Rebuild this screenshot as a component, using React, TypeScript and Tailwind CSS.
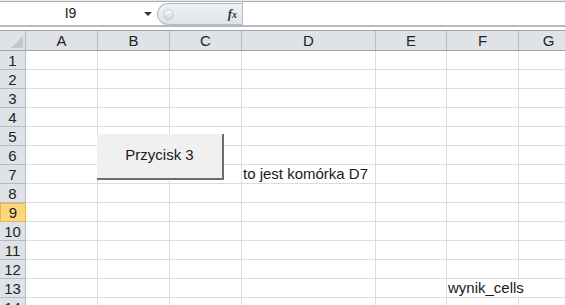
import React from 'react';

const cols = [
  { name: 'A', w: 'w-[72px]' },
  { name: 'B', w: 'w-[72px]' },
  { name: 'C', w: 'w-[72px]' },
  { name: 'D', w: 'w-[134px]' },
  { name: 'E', w: 'w-[71px]' },
  { name: 'F', w: 'w-[72px]' },
  { name: 'G', w: 'w-[60px]' },
];

const rows = Array.from({ length: 14 }, (_, i) => i + 1);

const cellText: Record<string, string> = {
  D7: 'to jest komórka D7',
  F13: 'wynik_cells',
};

const App = () => {
  return (
    <div className="relative w-[565px] h-[305px] overflow-hidden bg-white font-['Liberation_Sans',Arial,sans-serif] text-[15px] text-[#1a1a1a]">
      {/* pasek formuły */}
      <div className="h-[2px] bg-[#e4e7eb] border-b border-[#a9b0b8]" />
      <div className="flex h-[25px] border-b-2 border-[#b4bac2] bg-white">
        <div className="relative w-[157px] flex items-center justify-center">
          <span className="text-[14px] -ml-[16px]">I9</span>
          <span className="absolute left-[144px] top-[10px] w-0 h-0 border-l-[4px] border-r-[4px] border-t-[4px] border-l-transparent border-r-transparent border-t-[#333]" />
        </div>
        <div className="w-[85px] h-[22px] mt-[1px] rounded-l-full border border-r-0 border-[#b6bcc4] bg-gradient-to-b from-[#f1f2f4] to-[#dfe2e6] flex items-center">
          <span className="ml-[5px] w-[11px] h-[11px] rounded-full bg-gradient-to-b from-[#fafafa] to-[#cfd3d8] border border-[#c6cad0]" />
          <span className="ml-auto mr-[5px] font-['Liberation_Serif',serif] italic font-bold text-[13px] text-[#333]">
            f<span className="text-[10px]">x</span>
          </span>
        </div>
        <div className="flex-1 border-l border-[#b6bcc4]" />
      </div>
      <div className="h-[3px] bg-white" />

      {/* nagłówek kolumn */}
      <div className="flex h-[21px] border-t border-b border-[#9ea4ab] bg-[#dfe3e8]">
        <div className="relative w-[26px] shrink-0 border-r border-[#b7bcc2]">
          <svg className="absolute right-[2px] bottom-[2px]" width="12" height="12" viewBox="0 0 12 12">
            <polygon points="12,0 12,12 0,12" fill="#c3c7cc" />
          </svg>
        </div>
        {cols.map((c) => (
          <div
            key={c.name}
            className={`${c.w} shrink-0 border-r border-[#b7bcc2] flex items-center justify-center leading-none text-[#222]`}
          >
            {c.name}
          </div>
        ))}
      </div>

      {/* wiersze */}
      {rows.map((r) => {
        const selected = r === 9;
        return (
          <div key={r} className="flex h-[19px]">
            <div
              className={
                selected
                  ? 'w-[26px] shrink-0 bg-[#f9d87f] border border-[#e9b647] flex items-center justify-center leading-none text-[#222]'
                  : 'w-[26px] shrink-0 bg-[#dfe3e8] border-r border-b border-[#b7bcc2] flex items-center justify-center leading-none text-[#222]'
              }
            >
              {r}
            </div>
            {cols.map((c) => {
              const key = `${c.name}${r}`;
              const text = cellText[key];
              const hideRight = key === 'F13';
              return (
                <div
                  key={key}
                  className={`${c.w} shrink-0 relative border-b border-[#dadcdd] ${hideRight ? 'border-r border-r-white' : 'border-r border-r-[#dadcdd]'}`}
                >
                  {text && (
                    <span className="absolute left-[1px] bottom-[1px] z-10 whitespace-nowrap leading-[17px] bg-white pr-[2px]">
                      {text}
                    </span>
                  )}
                </div>
              );
            })}
          </div>
        );
      })}

      {/* przycisk formantu */}
      <button className="absolute left-[97px] top-[134px] w-[127px] h-[46px] bg-[#f0f0f0] border-r-2 border-b-2 border-[#6d6d6d] flex items-center justify-center text-[15px] text-[#1a1a1a] pb-[1px]">
        Przycisk 3
      </button>
    </div>
  );
};

export default App;
